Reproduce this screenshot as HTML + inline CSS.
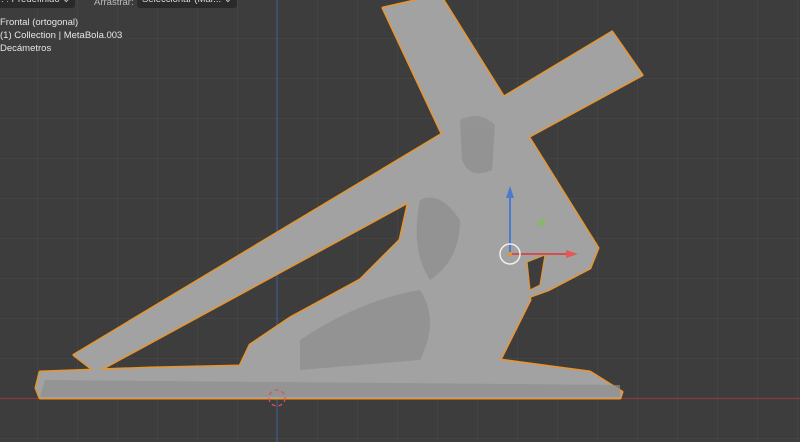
<!DOCTYPE html>
<html><head><style>
html,body{margin:0;padding:0;background:#3d3d3d;width:800px;height:442px;overflow:hidden;font-family:"Liberation Sans",sans-serif}
.t{position:absolute;left:0;color:#e6e6e6;font-size:9.5px}
.hdr{position:absolute;top:-6px;height:14px;background:#2a2a2a;border-radius:3px;color:#ddd;font-size:9.5px;line-height:12px;padding:0 5px}
</style></head><body>
<svg width="800" height="442" style="position:absolute;left:0;top:0">
<defs><pattern id="g" width="40" height="40" patternUnits="userSpaceOnUse" x="37" y="-2">
<path d="M0 0H40M0 0V40" stroke="#474747" stroke-width="1.2" fill="none"/></pattern>
<g id="s">
<polygon points="74,355 612,32 642,75 96,372"/>
<polygon points="383,8 440,-5 598,248 590,268 548,290 520,300"/>
<polygon points="40,372 150,368 240,366 250,345 290,318 360,280 400,240 410,195 430,180 445,165 448,125 462,105 485,103 505,120 505,155 490,185 495,235 520,245 530,300 500,360 590,372 622,392 620,398 40,398 36,388"/>
</g></defs>
<rect width="800" height="442" fill="url(#g)"/>
<line x1="277" y1="0" x2="277" y2="442" stroke="#3e5a8a" stroke-width="1.2"/>
<line x1="0" y1="398.5" x2="800" y2="398.5" stroke="#8a3a3a" stroke-width="1.2"/>
<use href="#s" fill="#e89530" stroke="#e89530" stroke-width="3" stroke-linejoin="round"/>
<use href="#s" fill="#a2a2a2"/>
<g fill="#8e8e8e" opacity=".7">
<path d="M300 340 Q360 300 420 290 Q440 320 420 360 L300 370Z"/>
<path d="M420 200 Q440 190 460 220 Q460 260 430 280 Q410 250 420 200Z"/>
<path d="M45 380 L620 385 L620 397 L40 397Z"/>
<path d="M460 120 Q480 110 495 125 L492 170 Q470 180 462 160Z"/>
</g>
<polygon points="527,262 545,255 540,285 530,290" fill="#3d3d3d" stroke="#e89530" stroke-width="1.2"/>
<line x1="510" y1="254" x2="510" y2="195" stroke="#4a7bd0" stroke-width="2"/>
<polygon points="510,186 506,198 514,198" fill="#4a7bd0"/>
<line x1="510" y1="254" x2="568" y2="254" stroke="#d05050" stroke-width="2"/>
<polygon points="578,254 566,250 566,258" fill="#e05a5a"/>
<rect x="538" y="219" width="7" height="7" fill="#7fbf5a" opacity=".7"/>
<circle cx="510" cy="254" r="10" fill="none" stroke="#eee" stroke-width="1.5"/>
<circle cx="510" cy="254" r="2" fill="#e89530"/>
<circle cx="277" cy="398" r="8" fill="none" stroke="#e05050" stroke-width="1.3" stroke-dasharray="4 3"/>
</svg>
<div class="hdr" style="left:-4px">: <span style="opacity:.7">⁞</span> Predefinido ⌄</div>
<div class="t" style="top:-3px;left:94px;color:#bbb">Arrastrar:</div>
<div class="hdr" style="left:137px">Seleccionar (Mar... ⌄</div>
<div class="t" style="top:17px">Frontal (ortogonal)</div>
<div class="t" style="top:30px">(1) Collection | MetaBola.003</div>
<div class="t" style="top:43px">Decámetros</div>
</body></html>
